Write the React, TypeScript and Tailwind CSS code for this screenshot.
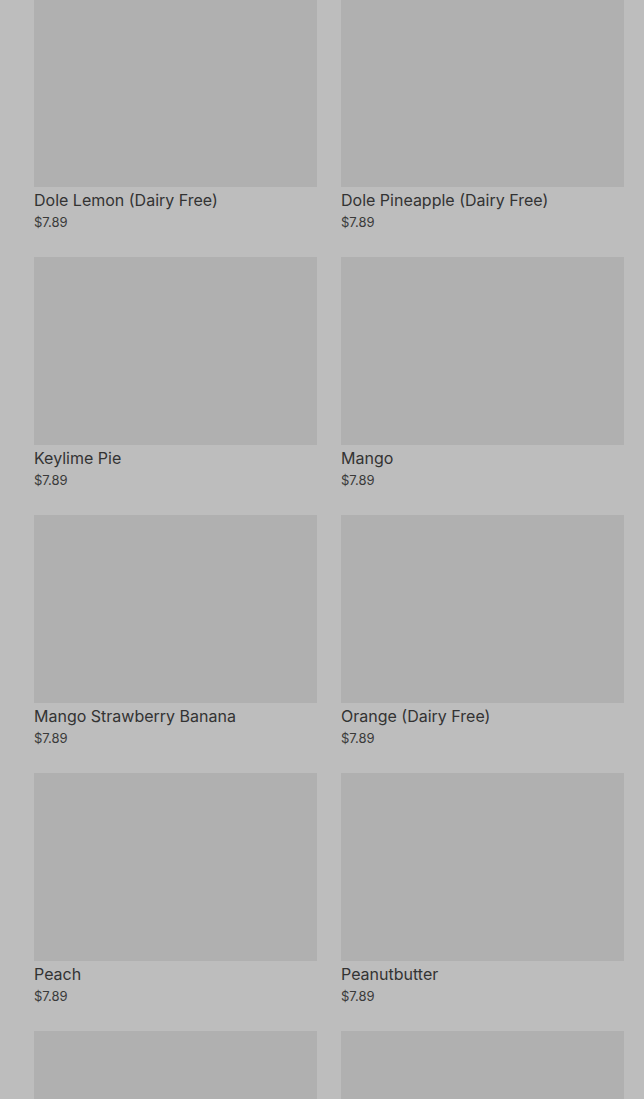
const products = [
  { name: 'Dole Lemon (Dairy Free)', price: '$7.89' },
  { name: 'Dole Pineapple (Dairy Free)', price: '$7.89' },
  { name: 'Keylime Pie', price: '$7.89' },
  { name: 'Mango', price: '$7.89' },
  { name: 'Mango Strawberry Banana', price: '$7.89' },
  { name: 'Orange (Dairy Free)', price: '$7.89' },
  { name: 'Peach', price: '$7.89' },
  { name: 'Peanutbutter', price: '$7.89' },
];

function ProductCard({ name, price }: { name: string; price: string }) {
  return (
    <div className="flex flex-col">
      <div className="h-[188px] w-full bg-[#b0b0b0]" />
      <p className="mt-[1px] text-[16px] leading-[24px] text-[#333333]">{name}</p>
      <p className="text-[13px] leading-[21px] text-[#3a3a3a]">{price}</p>
    </div>
  );
}

export default function App() {
  return (
    <div
      className="h-[1099px] overflow-hidden bg-[#bdbdbd] pl-[34px] pr-[20px]"
      style={{ fontFamily: 'Inter, "Liberation Sans", sans-serif' }}
    >
      <div className="-mt-px grid grid-cols-2 gap-x-[24px] gap-y-[24px]">
        {products.map((p) => (
          <ProductCard key={p.name} name={p.name} price={p.price} />
        ))}
        <div className="h-[188px] bg-[#b0b0b0]" />
        <div className="h-[188px] bg-[#b0b0b0]" />
      </div>
    </div>
  );
}
